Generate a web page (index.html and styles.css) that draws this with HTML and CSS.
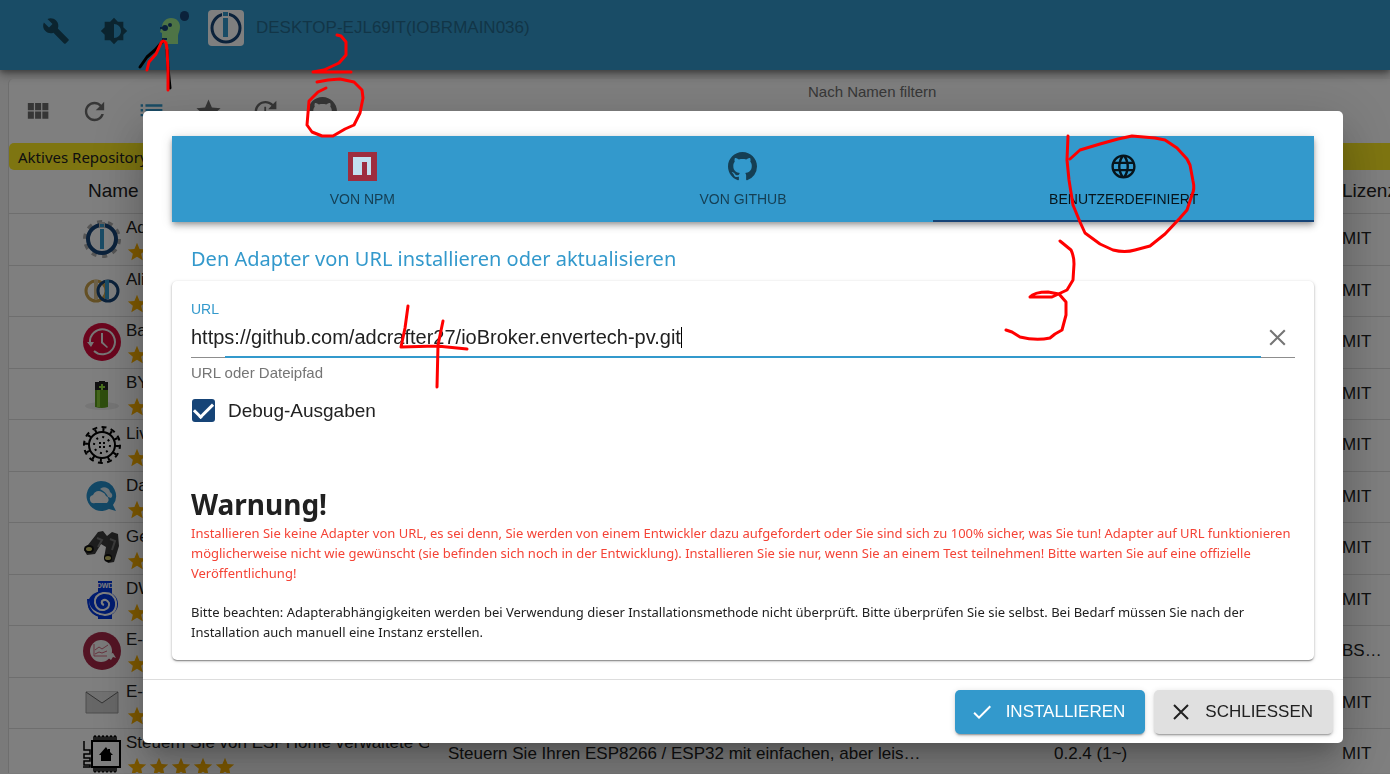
FILE: index.html
```html
<!DOCTYPE html>
<html lang="de">
<head>
    <meta charset="UTF-8">
    <meta name="viewport" content="width=device-width, initial-scale=1.0">
    <title>ioBroker Admin</title>
    <link rel="stylesheet" href="styles.css">
</head>
<body>
    <!-- Shared symbols -->
    <svg class="symbols" aria-hidden="true">
        <symbol id="star" viewBox="0 0 24 24"><path d="M12 17.27L18.18 21l-1.64-7.03L22 9.24l-7.19-.61L12 2 9.19 8.63 2 9.24l5.46 4.73L5.82 21z"/></symbol>
        <symbol id="stars" viewBox="0 0 110 22">
            <use href="#star" x="0" width="22" height="22"/>
            <use href="#star" x="22" width="22" height="22"/>
            <use href="#star" x="44" width="22" height="22"/>
            <use href="#star" x="66" width="22" height="22"/>
            <use href="#star" x="88" width="22" height="22"/>
        </symbol>
        <symbol id="github" viewBox="0 0 16 16"><path d="M8 0C3.58 0 0 3.58 0 8c0 3.54 2.29 6.53 5.47 7.59.4.07.55-.17.55-.38 0-.19-.01-.82-.01-1.49-2.01.37-2.53-.49-2.69-.94-.09-.23-.48-.94-.82-1.13-.28-.15-.68-.52-.01-.53.63-.01 1.08.58 1.23.82.72 1.21 1.87.87 2.33.66.07-.52.28-.87.51-1.07-1.78-.2-3.64-.89-3.64-3.95 0-.87.31-1.59.82-2.15-.08-.2-.36-1.02.08-2.12 0 0 .67-.21 2.2.82.64-.18 1.32-.27 2-.27s1.36.09 2 .27c1.53-1.04 2.2-.82 2.2-.82.44 1.1.16 1.92.08 2.12.51.56.82 1.27.82 2.15 0 3.07-1.87 3.75-3.65 3.95.29.25.54.73.54 1.48 0 1.07-.01 1.93-.01 2.2 0 .21.15.46.55.38A8.01 8.01 0 0 0 16 8c0-4.42-3.58-8-8-8z"/></symbol>
        <symbol id="close" viewBox="0 0 24 24"><path d="M5 5l14 14M19 5L5 19" fill="none" stroke="currentColor" stroke-width="2"/></symbol>
    </svg>

    <header class="app-bar">
        <button class="bar-button" aria-label="Einstellungen">
            <svg viewBox="0 0 24 24"><path d="M22.7 19l-9.1-9.1c.9-2.3.4-5-1.5-6.9-2-2-5-2.4-7.4-1.3L9 6 6 9 1.6 4.7C.4 7.1.9 10.1 2.9 12.1c1.9 1.9 4.6 2.4 6.9 1.5l9.1 9.1c.4.4 1 .4 1.4 0l2.3-2.3c.5-.4.5-1.1.1-1.4z"/></svg>
        </button>
        <button class="bar-button" aria-label="Farbschema">
            <svg viewBox="0 0 24 24"><path d="M20 8.69V4h-4.69L12 .69 8.69 4H4v4.69L.69 12 4 15.31V20h4.69L12 23.31 15.31 20H20v-4.69L23.31 12 20 8.69zM12 18V6c3.31 0 6 2.69 6 6s-2.69 6-6 6z"/></svg>
        </button>
        <button class="bar-button expert" aria-label="Expertenmodus">
            <svg viewBox="0 0 28 28">
                <path class="expert-head" d="M13 1c6 0 9 4 9 9 0 4-2 6-2 9v8H7v-5H4v-6l-2-1 2-5c0-5 4-9 9-9z"/>
                <circle cx="7" cy="11" r="3"/><circle cx="12" cy="8" r="2"/><path d="M2 10h5v2H2zM4 21h5v2H4z"/>
            </svg>
            <span class="badge"></span>
        </button>
        <svg class="host-logo" viewBox="0 0 36 36">
            <rect width="36" height="36" rx="4" fill="#fff"/>
            <circle cx="18" cy="18" r="14" fill="none" stroke="#164477" stroke-width="3"/>
            <path d="M14 2h7v5h-7z" fill="#fff"/>
            <path d="M15 2h5v4h-5zM15 8h5v19h-5z" fill="#39c"/>
        </svg>
        <span class="host-name">DESKTOP-EJL69IT(IOBRMAIN036)</span>
    </header>

    <main class="page">
        <div class="toolbar">
            <div class="toolbar-buttons">
                <button class="tool" aria-label="Kacheln"><svg viewBox="0 0 24 24"><path d="M4 11h5V5H4v6zm0 7h5v-6H4v6zm6 0h5v-6h-5v6zm6 0h5v-6h-5v6zm-6-7h5V5h-5v6zm6-6v6h5V5h-5z"/></svg></button>
                <button class="tool" aria-label="Aktualisieren"><svg viewBox="0 0 24 24"><path d="M17.65 6.35C16.2 4.9 14.21 4 12 4c-4.42 0-7.99 3.58-7.99 8s3.57 8 7.99 8c3.73 0 6.84-2.55 7.73-6h-2.08c-.82 2.33-3.04 4-5.65 4-3.31 0-6-2.69-6-6s2.69-6 6-6c1.66 0 3.14.69 4.22 1.78L13 11h7V4l-2.35 2.35z"/></svg></button>
                <button class="tool active" aria-label="Liste"><svg viewBox="0 0 24 24"><path d="M3 12h2v-2H3v2zm0 4h2v-2H3v2zm0-8h2V6H3v2zm4 4h14v-2H7v2zm0 4h14v-2H7v2zm0-10v2h14V6H7z"/></svg></button>
                <button class="tool" aria-label="Installiert"><svg><use href="#star"/></svg></button>
                <button class="tool" aria-label="Updates"><svg viewBox="0 0 24 24"><path d="M21 10.12h-6.78l2.74-2.82c-2.73-2.7-7.15-2.8-9.88-.1-2.73 2.71-2.73 7.08 0 9.79s7.15 2.71 9.88 0C18.32 15.65 19 14.08 19 12.1h2c0 1.98-.88 4.55-2.64 6.29-3.51 3.48-9.21 3.48-12.72 0-3.5-3.47-3.53-9.11-.02-12.58s9.14-3.47 12.65 0L21 3v7.12zM12.5 8v4.25l3.5 2.08-.72 1.21L11 13V8h1.500z"/></svg></button>
                <button class="tool" aria-label="Eigene Quelle"><svg><use href="#github"/></svg></button>
            </div>
            <div class="filter">
                <label for="filter">Nach Namen filtern</label>
                <input type="text" id="filter">
            </div>
        </div>

        <p class="repository">Aktives Repository</p>

        <table class="adapters">
            <colgroup>
                <col class="col-name">
                <col>
                <col class="col-version">
                <col class="col-license">
            </colgroup>
            <thead>
                <tr><th class="name-head">Name</th><th></th><th></th><th>Lizenz</th></tr>
            </thead>
            <tbody>
                <tr>
                    <td><div class="adapter">
                        <svg class="adapter-icon" viewBox="0 0 38 38">
                            <circle cx="19" cy="19" r="17" fill="none" stroke="#aaa" stroke-width="4" stroke-dasharray="5 5.680"/>
                            <circle cx="19" cy="19" r="14" fill="#fff" stroke="#164477" stroke-width="4"/>
                            <path d="M16 2h6v6h-6z" fill="#bbb"/><path d="M17 4h4v3h-4zM17 9h4v20h-4z" fill="#39c"/>
                        </svg>
                        <div class="adapter-text"><span>Admin</span><svg class="rating"><use href="#stars"/></svg></div>
                    </div></td><td></td><td></td><td>MIT</td>
                </tr>
                <tr>
                    <td><div class="adapter">
                        <svg class="adapter-icon" viewBox="0 0 38 38"><g fill="none" stroke-width="3">
                            <circle cx="13" cy="19" r="10" stroke="#c8a04a"/>
                            <path d="M13 8v19" stroke="#d8c090" stroke-width="4"/>
                            <circle cx="25" cy="19" r="10" stroke="#164477"/>
                            <path d="M24 8v19" stroke="#39c" stroke-width="4"/>
                        </g></svg>
                        <div class="adapter-text"><span>Alias-Manager</span><svg class="rating"><use href="#stars"/></svg></div>
                    </div></td><td></td><td></td><td>MIT</td>
                </tr>
                <tr>
                    <td><div class="adapter">
                        <svg class="adapter-icon" viewBox="0 0 38 38">
                            <circle cx="19" cy="19" r="19" fill="#d80b3c"/>
                            <path d="M7 20a12.500 12.500 0 1 1 4 8" fill="none" stroke="#eee" stroke-width="2"/>
                            <path d="M4 19h7l-3 5zM18 10h2v9l5 5-1 1-6-5z" fill="#eee"/>
                        </svg>
                        <div class="adapter-text"><span>Backup</span><svg class="rating"><use href="#stars"/></svg></div>
                    </div></td><td></td><td></td><td>MIT</td>
                </tr>
                <tr>
                    <td><div class="adapter">
                        <svg class="adapter-icon" viewBox="0 0 38 38">
                            <ellipse cx="19" cy="31" rx="17" ry="4" fill="#ececec"/>
                            <path d="M12 7h4V6h6v1h3v25q-6 2-13 0z" fill="#5c9c1c"/>
                            <path d="M12 7h4V6h6v1h3v8H12z" fill="#222"/>
                            <path d="M14 15h3v17h-3z" fill="#8acc38"/>
                            <path d="M18 9h2v2h2v2h-2v2h-2v-2h-2v-2h2z" fill="#8fdc3c"/>
                        </svg>
                        <div class="adapter-text"><span>BYD</span><svg class="rating"><use href="#stars"/></svg></div>
                    </div></td><td></td><td></td><td>MIT</td>
                </tr>
                <tr>
                    <td><div class="adapter">
                        <svg class="adapter-icon" viewBox="0 0 38 38"><g fill="none" stroke="#000">
                            <circle cx="19" cy="19" r="13" stroke-width="2"/>
                            <circle cx="19" cy="19" r="15" stroke-width="4" stroke-dasharray="2 5.854"/>
                            <circle cx="19" cy="19" r="18" stroke-width="2" stroke-dasharray="5 4.425" stroke-dashoffset="1"/>
                            <circle cx="19" cy="19" r="8" stroke-width="2" stroke-dasharray="2 4.280"/>
                            <path d="M16 17h2m2 0h2m-6 4h2m2 0h2" stroke-width="2"/>
                        </g></svg>
                        <div class="adapter-text"><span>Live</span><svg class="rating"><use href="#stars"/></svg></div>
                    </div></td><td></td><td></td><td>MIT</td>
                </tr>
                <tr>
                    <td><div class="adapter">
                        <svg class="adapter-icon" viewBox="0 0 38 38">
                            <path d="M18 3a15 15 0 1 0 8 28l7 2-3-6A15 15 0 0 0 18 3z" fill="#2590cc"/>
                            <path d="M12 25a4 4 0 0 1-2-8 6 6 0 0 1 9-3q3 1 4 4a4 4 0 0 1 1 7z" fill="#f4f4f4"/>
                            <path d="M17 11a6 6 0 0 1 10 3q4 3 1 6l-3-1q-2-5-8-8z" fill="#dceaf2"/>
                        </svg>
                        <div class="adapter-text"><span>Daten</span><svg class="rating"><use href="#stars"/></svg></div>
                    </div></td><td></td><td></td><td>MIT</td>
                </tr>
                <tr>
                    <td><div class="adapter">
                        <svg class="adapter-icon" viewBox="0 0 38 38">
                            <path d="M12 7l3-4 5-1 4 5 5-4 6 2 1 12-5 16-6 1-4-5 2-11-5-3-6 10-8 1-3-5z" fill="#3b3b3b"/>
                            <path d="M14 9l5 2-4 7M27 10l5 2-3 9" fill="none" stroke="#777" stroke-width="2"/>
                            <ellipse cx="6" cy="20" rx="5" ry="4" fill="#111"/><ellipse cx="6" cy="20" rx="3" ry="2" fill="#c9c06a"/>
                            <ellipse cx="25" cy="29" rx="4" ry="4" fill="#111"/><ellipse cx="25" cy="29" rx="3" ry="2" fill="#c9c06a"/>
                        </svg>
                        <div class="adapter-text"><span>Geräte</span><svg class="rating"><use href="#stars"/></svg></div>
                    </div></td><td></td><td></td><td>MIT</td>
                </tr>
                <tr>
                    <td><div class="adapter">
                        <svg class="adapter-icon" viewBox="0 0 38 38">
                            <path d="M15 0h14v38H15z" fill="#0037e0"/>
                            <text class="dwd" x="22" y="7" text-anchor="middle">DWD</text>
                            <ellipse cx="20" cy="23" rx="15" ry="13" fill="#0037e0"/>
                            <path d="M5 14q-2 18 17 20 12-1 11-13-2-10-13-9-9 2-8 10 2 8 9 7 6-2 5-7-3-5-7-2-1 3 2 4" fill="none" stroke="#fff" stroke-width="2"/>
                            <path d="M5 18q0 16 16 18" fill="none" stroke="#0037e0" stroke-width="2"/>
                        </svg>
                        <div class="adapter-text"><span>DWD</span><svg class="rating"><use href="#stars"/></svg></div>
                    </div></td><td></td><td></td><td>MIT</td>
                </tr>
                <tr>
                    <td><div class="adapter">
                        <svg class="adapter-icon" viewBox="0 0 38 38">
                            <circle cx="19" cy="19" r="19" fill="#a82848"/>
                            <circle cx="18" cy="19" r="11" fill="#f4f4f4"/>
                            <path d="M11 12v12h13M12 18l4-3 3 2 6-4M12 22l4-2 3 1 5-2" fill="none" stroke="#d06a80"/>
                            <path d="M24 25l2-3 4-1 3 5-3-1-2 3z" fill="#f4f4f4"/>
                        </svg>
                        <div class="adapter-text"><span>E-Charts</span><svg class="rating"><use href="#stars"/></svg></div>
                    </div></td><td></td><td></td><td>BSD-3</td>
                </tr>
                <tr>
                    <td><div class="adapter">
                        <svg class="adapter-icon" viewBox="0 0 38 38">
                            <path d="M3 8h32v21H3z" fill="#cfcfcf" stroke="#999"/>
                            <path d="M3 8l16 11L35 8z" fill="#e2e2e2"/>
                            <path d="M3 8l16 11L35 8" fill="none" stroke="#666"/>
                        </svg>
                        <div class="adapter-text"><span>E-Mail</span><svg class="rating"><use href="#stars"/></svg></div>
                    </div></td><td></td><td></td><td>MIT</td>
                </tr>
                <tr>
                    <td><div class="adapter">
                        <svg class="adapter-icon" viewBox="0 0 38 38"><g fill="none" stroke="#000" stroke-width="2">
                            <path d="M9 6h28v26H9z"/>
                            <path stroke-width="1.500" d="M11 6V2q1-2 2 0v4m2 0V2q1-2 2 0v4m2 0V2q1-2 2 0v4m2 0V2q1-2 2 0v4m2 0V2q1-2 2 0v4m2 0V2q1-2 2 0v4M11 32v4q1 2 2 0v-4m2 0v4q1 2 2 0v-4m2 0v4q1 2 2 0v-4m2 0v4q1 2 2 0v-4m2 0v4q1 2 2 0v-4m2 0v4q1 2 2 0v-4"/>
                            <path stroke-width="1.500" d="M1 6v9h6v4H1v4h6v3H1v4h6v2H0"/>
                            <path d="M23 12l-7 8h2v6h10v-6h2l-3-3v-3h-2v1z" fill="#000" stroke="none"/>
                        </g></svg>
                        <div class="adapter-text"><span>Steuern Sie von ESPHome verwaltete Geräte</span><svg class="rating"><use href="#stars"/></svg></div>
                    </div></td>
                    <td>Steuern Sie Ihren ESP8266 / ESP32 mit einfachen, aber leis…</td><td>0.2.4 (1~)</td><td>MIT</td>
                </tr>
            </tbody>
        </table>
    </main>

    <!-- Install dialog -->
    <div class="backdrop">
        <div class="dialog" role="dialog" aria-labelledby="dialog-title">
            <div class="dialog-content">
                <div class="tabs" role="tablist">
                    <button class="tab" role="tab">
                        <svg viewBox="0 0 29 29"><path d="M0 0h29v29H0z" fill="#9e2d3f"/><path d="M5 5h18v18h-4V10h-5v13H5z" fill="#c2e0f0"/></svg>
                        VON NPM
                    </button>
                    <button class="tab" role="tab">
                        <svg><use href="#github"/></svg>
                        VON GITHUB
                    </button>
                    <button class="tab selected" role="tab" aria-selected="true">
                        <svg viewBox="0 0 24 24"><path d="M11.990 2C6.470 2 2 6.480 2 12s4.470 10 9.990 10C17.520 22 22 17.520 22 12S17.520 2 11.990 2zm6.930 6h-2.950c-.32-1.250-.78-2.450-1.380-3.560 1.840.63 3.370 1.910 4.330 3.560zM12 4.040c.83 1.200 1.480 2.530 1.910 3.960h-3.820c.43-1.430 1.080-2.760 1.910-3.960zM4.260 14C4.100 13.360 4 12.690 4 12s.1-1.360.26-2h3.380c-.08.66-.14 1.320-.14 2s.06 1.340.14 2H4.260zm.82 2h2.950c.32 1.250.78 2.450 1.380 3.560-1.840-.63-3.370-1.900-4.330-3.560zm2.950-8H5.080c.96-1.660 2.490-2.930 4.330-3.560C8.810 5.550 8.350 6.750 8.030 8zM12 19.960c-.83-1.200-1.480-2.530-1.910-3.960h3.820c-.43 1.430-1.080 2.760-1.910 3.960zM14.340 14H9.660c-.09-.66-.16-1.320-.16-2s.07-1.350.16-2h4.680c.09.65.16 1.320.16 2s-.07 1.340-.16 2zm.25 5.560c.6-1.110 1.060-2.310 1.380-3.560h2.950c-.96 1.650-2.490 2.930-4.330 3.560zM16.360 14c.08-.66.14-1.320.14-2s-.06-1.340-.14-2h3.380c.16.64.26 1.310.26 2s-.1 1.360-.26 2h-3.380z"/></svg>
                        BENUTZERDEFINIERT
                    </button>
                </div>

                <h2 class="dialog-title" id="dialog-title">Den Adapter von URL installieren oder aktualisieren</h2>

                <div class="card">
                    <label class="field-label" for="url">URL</label>
                    <div class="field">
                        <input type="text" id="url" value="https://github.com/adcrafter27/ioBroker.envertech-pv.git">
                        <span class="caret"></span>
                        <button class="clear" aria-label="Leeren"><svg><use href="#close"/></svg></button>
                    </div>
                    <p class="helper">URL oder Dateipfad</p>

                    <div class="check-row">
                        <input type="checkbox" id="debug" checked>
                        <label for="debug">Debug-Ausgaben</label>
                    </div>

                    <h3 class="warning-title">Warnung!</h3>
                    <p class="note warning">Installieren Sie keine Adapter von URL, es sei denn, Sie werden von einem Entwickler dazu aufgefordert oder Sie sind sich zu 100% sicher, was Sie tun! Adapter auf URL funktionieren möglicherweise nicht wie gewünscht (sie befinden sich noch in der Entwicklung). Installieren Sie sie nur, wenn Sie an einem Test teilnehmen! Bitte warten Sie auf eine offizielle Veröffentlichung!</p>
                    <p class="note">Bitte beachten: Adapterabhängigkeiten werden bei Verwendung dieser Installationsmethode nicht überprüft. Bitte überprüfen Sie sie selbst. Bei Bedarf müssen Sie nach der Installation auch manuell eine Instanz erstellen.</p>
                </div>
            </div>

            <div class="dialog-actions">
                <button class="action primary">
                    <svg viewBox="0 0 24 24"><path d="M9 16.170L4.830 12l-1.420 1.410L9 19 21 7l-1.410-1.410z"/></svg>
                    INSTALLIEREN
                </button>
                <button class="action">
                    <svg><use href="#close"/></svg>
                    SCHLIESSEN
                </button>
            </div>
        </div>
    </div>

    <!-- Hand-drawn step marks -->
    <svg class="marks" viewBox="0 0 1390 774" aria-hidden="true">
        <path class="shade" d="M140 67l7-10 8-7 8-9M167 50l1 18 2 20"/>
        <path d="M147 70l2-8 7-8 5-11q2-4 5 0l1 6 1 22v19"/>
        <path d="M337 35l4 1 5 6v13l-7 8-15 7-11 2h38"/>
        <path d="M326 88l-8 4-9 9-2 24 5 7 10 4h11l12-7 9-4 6-12 3-15-1-8-8-8-14-3-12 1-11 2"/>
        <path d="M1068 136l-1 24 2 20 4 25 7 17 5 11 15 11 13 6q12 3 22 0l15-4 15-12 15-16 7-8 5-15q3-6 1-14l-3-16-3-6-10-11-12-8-10-2-23-2-14 3-18 5-20 6-10 9"/>
        <path d="M1060 241l11 9q3 6 3 14l-1 16-6 10-15 7h-22q4-5 18-5l11 2 7 8v13l-4 15-7 4-5 4q-14 3-30-1l-8-5-6-2"/>
        <path d="M408 306l-3 22-4 19 36-1 30 3M443 321l-5 24-1 42"/>
    </svg>
</body>
</html>
```
FILE: styles.css
```css
* {
    box-sizing: border-box;
}
body {
    margin: 0;
    height: 100vh;
    overflow: hidden;
    display: flex;
    flex-direction: column;
    background-color: #f5f5f5;
    color: #212121;
    font-family: "Liberation Sans", Arial, sans-serif;
    font-size: 17px;
}
button {
    border: none;
    padding: 0;
    background: none;
    color: inherit;
    font-family: inherit;
    cursor: pointer;
}
svg {
    display: block;
    fill: currentColor;
}
h2,
h3,
p {
    margin: 0;
}
.symbols {
    position: absolute;
    width: 0;
    height: 0;
}

/* App bar */
.app-bar {
    display: flex;
    flex: none;
    align-items: flex-start;
    height: 70px;
    padding: 10px 27px;
    background-color: #3399cc;
    box-shadow: 0 2px 5px rgba(0, 0, 0, 0.3), 0 5px 10px rgba(0, 0, 0, 0.3);
    z-index: 1;
}
.bar-button {
    position: relative;
    display: flex;
    justify-content: center;
    align-items: center;
    width: 58px;
    height: 42px;
    color: #16485f;
}
.bar-button svg {
    width: 28px;
    height: 28px;
}
.bar-button.expert {
    color: #164477;
}
.expert-head {
    fill: #9ce88c;
}
.badge {
    position: absolute;
    top: 1px;
    right: 12px;
    width: 9px;
    height: 10px;
    border-radius: 5px;
    background-color: #164477;
}
.host-logo {
    width: 36px;
    height: 36px;
    margin: 0 12px 0 7px;
}
.host-name {
    line-height: 35px;
    color: #246b8f;
}

/* Adapter list */
.page {
    flex: 1;
    min-height: 0;
    overflow: hidden;
    margin: 9px 0 1px 8px;
    border-left: 1px solid #ddd;
    border-radius: 5px 0 0 0;
    background-color: #fff;
}
.toolbar {
    display: flex;
    height: 64px;
}
.toolbar-buttons {
    display: flex;
    flex: 1;
    align-items: center;
}
.tool {
    display: flex;
    justify-content: center;
    width: 57px;
    color: #6c6c6c;
}
.tool svg {
    width: 29px;
    height: 29px;
}
.tool.active {
    color: #3399cc;
}
.filter {
    width: 582px;
    padding-top: 4px;
    font-size: 15px;
    line-height: 18px;
    color: #707070;
}
.filter label {
    display: block;
}
.filter input {
    width: 240px;
    height: 30px;
    border: none;
    border-bottom: 1px solid #999;
}
.repository {
    height: 27px;
    padding-left: 9px;
    border-radius: 5px 0 0 5px;
    background-color: #fceb22;
    font-family: "Noto Sans", "Open Sans", sans-serif;
    font-size: 15px;
    line-height: 28px;
}
.adapters {
    width: 100%;
    table-layout: fixed;
    border-collapse: collapse;
}
.col-name {
    width: 439px;
}
.col-version {
    width: 288px;
}
.col-license {
    width: 48px;
}
.adapters th {
    height: 43px;
    padding: 0;
    overflow: hidden;
    border-bottom: 1px solid #ddd;
    font-size: 19px;
    font-weight: normal;
    text-align: left;
}
.adapters .name-head {
    padding-left: 79px;
}
.adapters td {
    height: 51px;
    padding: 0;
    border-bottom: 1px solid #ddd;
    overflow: hidden;
    text-overflow: ellipsis;
    white-space: nowrap;
}
.adapters td:last-child {
    padding-right: 8px;
}
.adapters tr:nth-child(odd) td {
    height: 52px;
}
.adapter {
    display: flex;
    align-items: center;
    gap: 5px;
    padding: 0 19px 0 74px;
}
.adapter-icon {
    flex: none;
    width: 38px;
    height: 38px;
}
.adapter-text {
    min-width: 0;
    overflow: hidden;
    line-height: 26px;
}
.rating {
    width: 110px;
    height: 22px;
    color: #ffb400;
}
.dwd {
    fill: #fff;
    font-size: 7px;
    font-weight: bold;
}

/* Dialog */
.backdrop {
    position: fixed;
    inset: 0;
    z-index: 2;
    padding: 111px 47px 31px 143px;
    background-color: rgba(0, 0, 0, 0.5);
}
.dialog {
    display: flex;
    flex-direction: column;
    height: 100%;
    border-radius: 5px;
    background-color: #fff;
    box-shadow: 0 13px 18px -8px rgba(0, 0, 0, 0.2), 0 29px 46px 4px rgba(0, 0, 0, 0.14), 0 11px 55px 10px rgba(0, 0, 0, 0.12);
}
.dialog-content {
    flex: 1;
    padding: 25px 29px 0;
}
.tabs {
    display: grid;
    grid-template-columns: repeat(3, 1fr);
    height: 86px;
    background-color: #3399cc;
    box-shadow: 0 2px 5px -1px rgba(0, 0, 0, 0.3), 0 5px 6px rgba(0, 0, 0, 0.14), 0 1px 12px rgba(0, 0, 0, 0.12);
}
.tab {
    display: flex;
    flex-direction: column;
    align-items: center;
    gap: 10px;
    padding-top: 16px;
    border-bottom: 2px solid transparent;
    color: rgba(0, 0, 0, 0.87);
    font-size: 14px;
}
.tab svg {
    width: 29px;
    height: 29px;
}
.tab:not(.selected) {
    color: #153f54;
}
.tab.selected {
    border-bottom-color: #164477;
}
.dialog-title {
    padding: 22px 19px;
    color: #3399cc;
    font-family: "Noto Sans", "Open Sans", sans-serif;
    font-size: 20px;
    font-weight: normal;
    line-height: 30px;
    height: 59px;
}
.card {
    height: 379px;
    padding: 19px;
    border-radius: 5px;
    box-shadow: 0 2px 1px -1px rgba(0, 0, 0, 0.2), 0 1px 2px rgba(0, 0, 0, 0.3), 0 1px 4px rgba(0, 0, 0, 0.12);
}
.field-label {
    display: block;
    color: #3399cc;
    font-size: 14px;
    line-height: 18px;
}
.field {
    position: relative;
    display: flex;
    align-items: center;
    height: 40px;
    border-bottom: 1px solid #8d8d8d;
}
.field::after {
    content: "";
    position: absolute;
    left: 34px;
    right: 34px;
    bottom: -1px;
    height: 2px;
    background-color: #3399cc;
}
.field input {
    field-sizing: content;
    padding: 0;
    border: none;
    outline: none;
    color: #212121;
    font-family: inherit;
    font-size: 20px;
}
.caret {
    width: 1px;
    height: 21px;
    background-color: #000;
}
.clear {
    margin-left: auto;
    padding-right: 5px;
    color: #757575;
}
.clear svg {
    width: 25px;
    height: 25px;
}
.helper {
    padding-top: 5px;
    color: #757575;
    font-size: 15px;
    line-height: 20px;
}
.check-row {
    display: flex;
    align-items: center;
    gap: 13px;
    padding: 16px 1px;
    font-size: 19px;
    line-height: 22px;
}
.check-row input {
    appearance: none;
    display: grid;
    place-items: center;
    width: 23px;
    height: 23px;
    margin: 0;
    border-radius: 3px;
    background-color: #164477;
}
.check-row input:checked::before {
    content: "";
    width: 16px;
    height: 8px;
    margin-bottom: 5px;
    border: solid #fff;
    border-width: 0 0 3px 3px;
    transform: rotate(-45deg);
}
.warning-title {
    padding-top: 47px;
    font-family: "Noto Sans", "Open Sans", sans-serif;
    font-size: 28px;
    line-height: 38px;
}
.note {
    font-family: "Noto Sans", "Open Sans", sans-serif;
    font-size: 13px;
    line-height: 20px;
}
.note.warning {
    margin-bottom: 19px;
    color: #f44336;
}
.dialog-actions {
    display: flex;
    justify-content: flex-end;
    gap: 9px;
    height: 64px;
    padding: 10px 10px 9px;
    border-top: 1px solid #ddd;
}
.action {
    display: flex;
    align-items: center;
    gap: 12px;
    height: 44px;
    padding: 0 20px 0 15px;
    border-radius: 5px;
    background-color: #e0e0e0;
    box-shadow: 0 3px 1px -2px rgba(0, 0, 0, 0.2), 0 2px 2px rgba(0, 0, 0, 0.14), 0 1px 6px rgba(0, 0, 0, 0.12);
    font-size: 17px;
}
.action svg {
    width: 24px;
    height: 24px;
}
.action.primary {
    background-color: #3399cc;
    color: #fff;
}

/* Step marks lie over everything */
.marks {
    position: fixed;
    top: 0;
    left: 0;
    z-index: 3;
    width: 1390px;
    height: 774px;
    pointer-events: none;
    fill: none;
    stroke: #ff0000;
    stroke-width: 3;
    stroke-linecap: round;
    stroke-linejoin: round;
}
.marks .shade {
    stroke: #000;
}
```
